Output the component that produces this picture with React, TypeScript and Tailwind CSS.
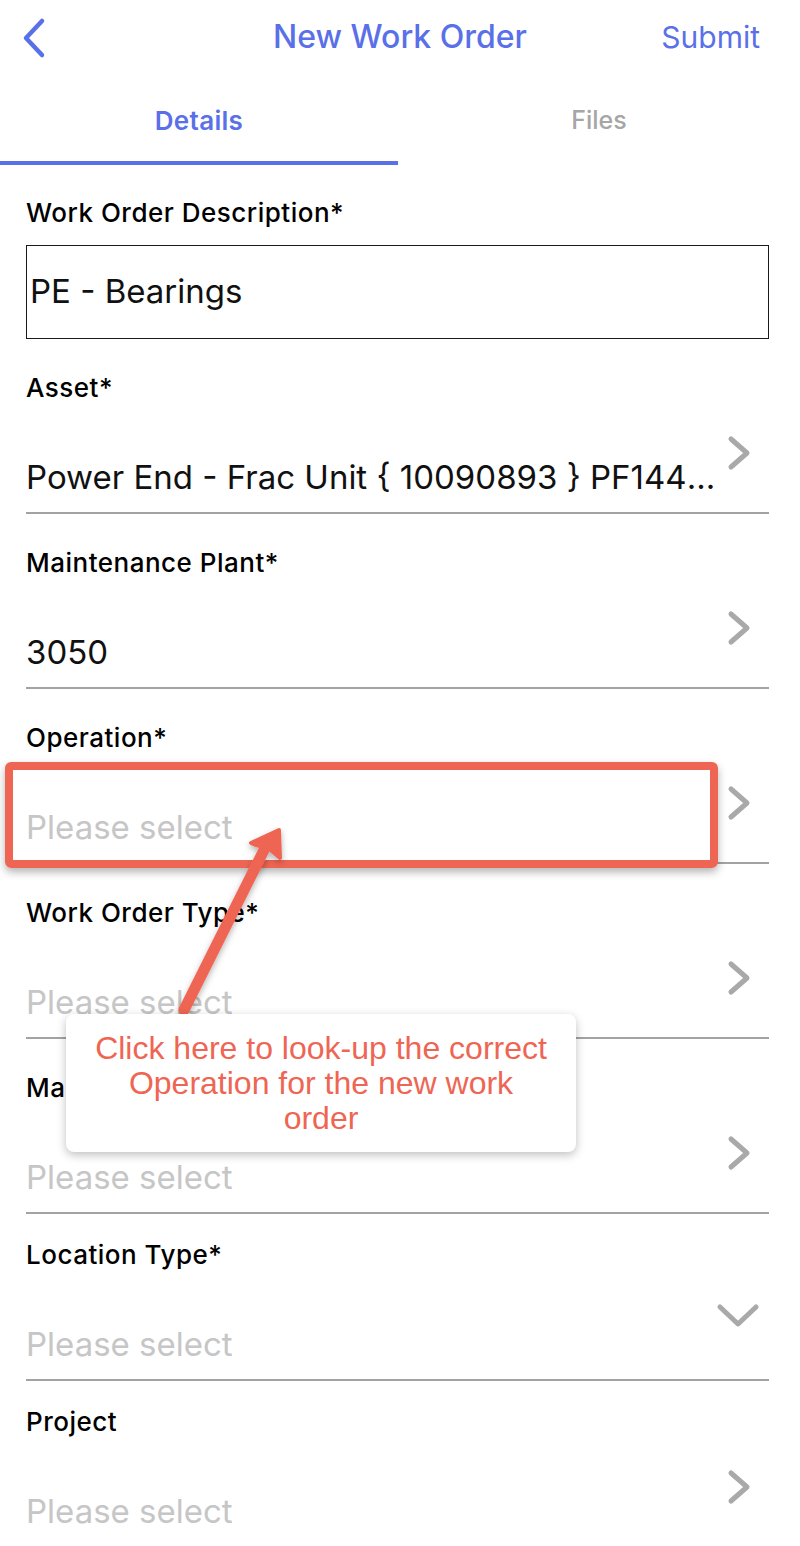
import React from "react";

const BLUE = "text-[#5a70e8]";

function ChevronRight() {
  return (
    <svg width="26" height="36" viewBox="0 0 26 36" className="block">
      <path d="M5 4 L21 18 L5 32" fill="none" stroke="#a9a9a9" strokeWidth="5" strokeLinecap="round" strokeLinejoin="round" />
    </svg>
  );
}

function ChevronDown() {
  return (
    <svg width="44" height="28" viewBox="0 0 44 28" className="block">
      <path d="M4 4 L22 21 L40 4" fill="none" stroke="#a9a9a9" strokeWidth="5" strokeLinecap="round" strokeLinejoin="round" />
    </svg>
  );
}

type RowProps = {
  label: string;
  value?: string;
  down?: boolean;
  compact?: boolean;
};

function SelectRow({ label, value, down, compact }: RowProps) {
  return (
    <div className={compact ? "pt-[26px]" : "pt-[34px]"}>
      <div className="text-[26px] leading-[30px] font-medium text-black tracking-[0.5px]">{label}</div>
      <div className="relative h-[111px] border-b-2 border-[#a3a3a3] flex items-end pb-[16px]">
        <div
          className={
            "text-[33px] leading-[38px] truncate pr-[42px] " +
            (value ? "text-[#111]" : "text-[#c6c6c6]")
          }
        >
          {value ?? "Please select"}
        </div>
        <div className={down ? "absolute right-[9px] top-[33px]" : "absolute right-[17px] top-[32px]"}>
          {down ? <ChevronDown /> : <ChevronRight />}
        </div>
      </div>
    </div>
  );
}

export default function App() {
  return (
    <div
      className="relative w-[800px] h-[1546px] bg-white overflow-hidden"
      style={{ fontFamily: "Inter, Roboto, 'Noto Sans', sans-serif" }}
    >
      {/* Header */}
      <div className="relative h-[74px] flex items-center justify-center">
        <div className="absolute left-[18px] top-[17px]">
          <svg width="32" height="42" viewBox="0 0 32 42">
            <path d="M24 4 L8 21 L24 38" fill="none" stroke="#5a70e8" strokeWidth="4.5" strokeLinecap="round" strokeLinejoin="round" />
          </svg>
        </div>
        <div className={"text-[32px] leading-[36px] font-medium " + BLUE}>New Work Order</div>
        <div className={"absolute right-[40px] top-[19px] text-[30px] leading-[36px] " + BLUE}>Submit</div>
      </div>

      {/* Tabs */}
      <div className="flex h-[91px]">
        <div className="w-[398px] flex items-center justify-center border-b-[4px] border-[#5a70e8] pt-[6px]">
          <span className={"text-[26px] font-semibold tracking-[0.3px] " + BLUE}>Details</span>
        </div>
        <div className="flex-1 flex items-center justify-center pt-[6px] pb-[4px]">
          <span className="text-[25px] font-medium text-[#a6a6a6]">Files</span>
        </div>
      </div>

      {/* Form */}
      <div className="pl-[26px] pr-[31px]">
        <div className="pt-[33px]">
          <div className="text-[26px] leading-[30px] font-medium text-black tracking-[0.5px]">Work Order Description*</div>
          <div className="mt-[17px] h-[94px] border-[1.5px] border-[#1a1a1a] flex items-center pl-[3px]">
            <span className="text-[33px] text-[#111]">PE - Bearings</span>
          </div>
        </div>
        <SelectRow label="Asset*" value="Power End - Frac Unit { 10090893 } PF1449008 - Pump" />
        <SelectRow label="Maintenance Plant*" value="3050" />
        <SelectRow label="Operation*" />
        <SelectRow label="Work Order Type*" />
        <SelectRow label="Maintenance Activity Type*" />
        <SelectRow label="Location Type*" down compact />
        <SelectRow label="Project" compact />
      </div>

      {/* Annotation: highlight rectangle */}
      <div className="absolute left-[5px] top-[762px] w-[713px] h-[106px] rounded-[6px] border-[8px] border-[#ef6553] shadow-[0_4px_8px_rgba(0,0,0,0.3)]" />

      {/* Annotation: arrow */}
      <svg className="absolute left-0 top-0" width="800" height="1546" style={{ pointerEvents: "none" }}>
        <defs>
          <filter id="sh" x="-20%" y="-20%" width="140%" height="140%">
            <feDropShadow dx="0" dy="3" stdDeviation="3" floodColor="#000" floodOpacity="0.3" />
          </filter>
        </defs>
        <g filter="url(#sh)">
          <line x1="184" y1="1010" x2="266" y2="846" stroke="#ef6553" strokeWidth="11" strokeLinecap="round" />
          <path d="M279 830 L251 843 Q262 848 266 846 L280 858 Z" fill="#ef6553" stroke="#ef6553" strokeWidth="4" strokeLinejoin="round" />
        </g>
      </svg>

      {/* Annotation: callout */}
      <div className="absolute left-[66px] top-[1014px] w-[510px] h-[138px] bg-white rounded-[8px] shadow-[0_3px_10px_rgba(0,0,0,0.25)] flex items-center justify-center">
        <div
          className="text-center text-[32px] leading-[35px] text-[#ef6553] px-[26px]"
          style={{ fontFamily: "'Liberation Sans', Arial, sans-serif" }}
        >
          Click here to look-up the correct Operation for the new work order
        </div>
      </div>
    </div>
  );
}
